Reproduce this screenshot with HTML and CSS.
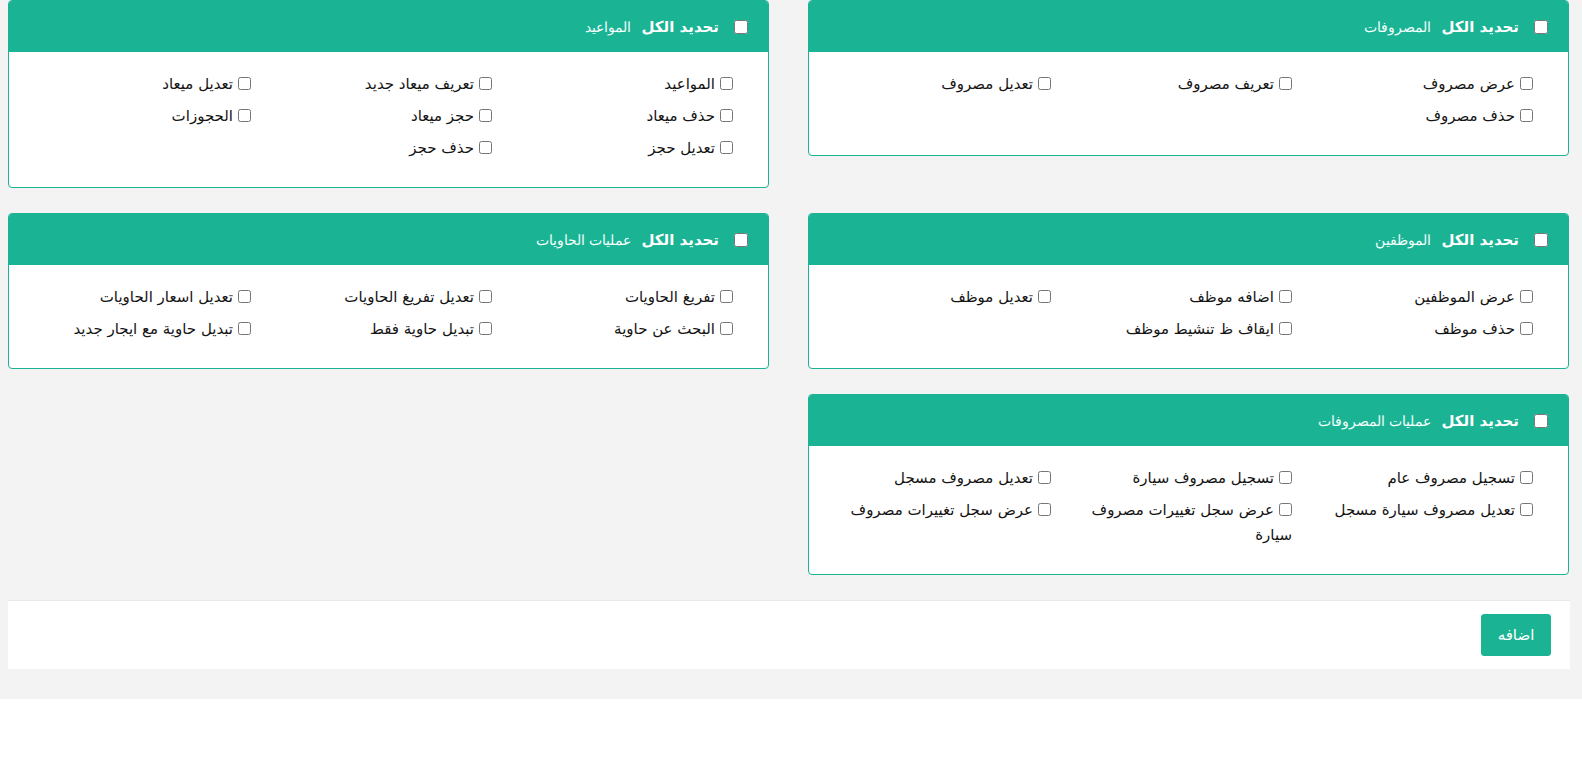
FILE: index.html
```html
<!DOCTYPE html>
<html lang="ar" dir="rtl">
<head>
<meta charset="utf-8">
<title>الصلاحيات</title>
<link rel="stylesheet" href="styles.css">
</head>
<body>
<div class="page">
  <div class="cards">
    <section class="card">
      <header class="card-head">
        <label class="all"><input type="checkbox"><span class="all-text">تحديد الكل</span></label>
        <span class="title">المصروفات</span>
      </header>
      <div class="card-body">
        <label class="item"><input type="checkbox">عرض مصروف</label>
        <label class="item"><input type="checkbox">تعريف مصروف</label>
        <label class="item"><input type="checkbox">تعديل مصروف</label>
        <label class="item"><input type="checkbox">حذف مصروف</label>
      </div>
    </section>
    <section class="card">
      <header class="card-head">
        <label class="all"><input type="checkbox"><span class="all-text">تحديد الكل</span></label>
        <span class="title">المواعيد</span>
      </header>
      <div class="card-body">
        <label class="item"><input type="checkbox">المواعيد</label>
        <label class="item"><input type="checkbox">تعريف ميعاد جديد</label>
        <label class="item"><input type="checkbox">تعديل ميعاد</label>
        <label class="item"><input type="checkbox">حذف ميعاد</label>
        <label class="item"><input type="checkbox">حجز ميعاد</label>
        <label class="item"><input type="checkbox">الحجوزات</label>
        <label class="item"><input type="checkbox">تعديل حجز</label>
        <label class="item"><input type="checkbox">حذف حجز</label>
      </div>
    </section>
    <section class="card">
      <header class="card-head">
        <label class="all"><input type="checkbox"><span class="all-text">تحديد الكل</span></label>
        <span class="title">الموظفين</span>
      </header>
      <div class="card-body">
        <label class="item"><input type="checkbox">عرض الموظفين</label>
        <label class="item"><input type="checkbox">اضافه موظف</label>
        <label class="item"><input type="checkbox">تعديل موظف</label>
        <label class="item"><input type="checkbox">حذف موظف</label>
        <label class="item"><input type="checkbox">ايقاف ظ تنشيط موظف</label>
      </div>
    </section>
    <section class="card">
      <header class="card-head">
        <label class="all"><input type="checkbox"><span class="all-text">تحديد الكل</span></label>
        <span class="title">عمليات الحاويات</span>
      </header>
      <div class="card-body">
        <label class="item"><input type="checkbox">تفريغ الحاويات</label>
        <label class="item"><input type="checkbox">تعديل تفريغ الحاويات</label>
        <label class="item"><input type="checkbox">تعديل اسعار الحاويات</label>
        <label class="item"><input type="checkbox">البحث عن حاوية</label>
        <label class="item"><input type="checkbox">تبديل حاوية فقط</label>
        <label class="item"><input type="checkbox">تبديل حاوية مع ايجار جديد</label>
      </div>
    </section>
    <section class="card">
      <header class="card-head">
        <label class="all"><input type="checkbox"><span class="all-text">تحديد الكل</span></label>
        <span class="title">عمليات المصروفات</span>
      </header>
      <div class="card-body">
        <label class="item"><input type="checkbox">تسجيل مصروف عام</label>
        <label class="item"><input type="checkbox">تسجيل مصروف سيارة</label>
        <label class="item"><input type="checkbox">تعديل مصروف مسجل</label>
        <label class="item"><input type="checkbox">تعديل مصروف سيارة مسجل</label>
        <label class="item"><input type="checkbox">عرض سجل تغييرات مصروف سيارة</label>
        <label class="item"><input type="checkbox">عرض سجل تغييرات مصروف</label>
      </div>
    </section>
  </div>
  <div class="actions">
    <button class="btn" type="button">اضافه</button>
  </div>
</div>
</body>
</html>
```
FILE: styles.css
```css
html, body {
  margin: 0;
  padding: 0;
  background: #ffffff;
}

body {
  font-family: "DejaVu Sans", "Noto Sans", sans-serif;
  color: #141414;
}

.page {
  background: #f3f3f3;
  padding: 0 13px 30px 8px;
  direction: rtl;
}

.cards {
  display: grid;
  grid-template-columns: 761px 761px;
  column-gap: 39px;
  row-gap: 25px;
  align-items: start;
}

.card {
  background: #ffffff;
  border: 1px solid #1ab394;
  border-radius: 4px;
  overflow: hidden;
}

.card-head {
  background: #1ab394;
  color: #ffffff;
  height: 50px;
  display: flex;
  align-items: center;
  padding: 1px 20px 0;
  gap: 10px;
}

.all {
  display: flex;
  align-items: center;
  gap: 15px;
  font-weight: bold;
  font-size: 15px;
}

.all input {
  margin: 0;
  width: 14px;
  height: 14px;
}

.title {
  font-size: 14px;
  font-weight: 300;
  color: #f4fffc;
}

.card-body {
  display: grid;
  grid-template-columns: repeat(3, 1fr);
  padding: 20px 18px 19px;
}

.item {
  display: block;
  padding-right: 17px;
  font-size: 15px;
  line-height: 25px;
  margin-bottom: 7px;
}

.item input {
  margin: 0 0 0 5px;
  width: 13px;
  height: 13px;
  vertical-align: -1px;
}

.actions {
  margin-top: 25px;
  margin-right: -1px;
  background: #ffffff;
  border-top: 1px solid #e7eaec;
  height: 68px;
  display: flex;
  align-items: center;
  padding: 0 19px;
}

.btn {
  font-family: "DejaVu Sans", sans-serif;
  background: #1ab394;
  color: #ffffff;
  border: 1px solid #1ab394;
  border-radius: 3px;
  width: 70px;
  height: 42px;
  font-size: 15px;
  cursor: pointer;
}
```
